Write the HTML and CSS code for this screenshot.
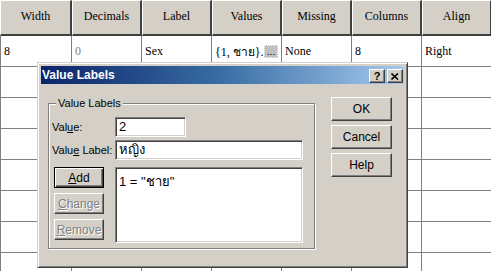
FILE: index.html
```html
<!doctype html>
<html>
  <head>
    <meta charset="utf-8">
    <title>Variable View - Value Labels</title>
    <link rel="stylesheet" href="styles.css">
  </head>
  <body>

    <div class="sheet">
      <div class="hd">Width</div>
      <div class="hd">Decimals</div>
      <div class="hd">Label</div>
      <div class="hd">Values</div>
      <div class="hd">Missing</div>
      <div class="hd">Columns</div>
      <div class="hd">Align</div>

      <div class="cell">8</div>
      <div class="cell dim">0</div>
      <div class="cell">Sex</div>
      <div class="cell values">{1, ชาย}.<span class="dots">...</span></div>
      <div class="cell">None</div>
      <div class="cell">8</div>
      <div class="cell">Right</div>

      <div class="cell"></div><div class="cell"></div><div class="cell"></div><div class="cell"></div><div class="cell"></div><div class="cell"></div><div class="cell"></div>
      <div class="cell"></div><div class="cell"></div><div class="cell"></div><div class="cell"></div><div class="cell"></div><div class="cell"></div><div class="cell"></div>
      <div class="cell"></div><div class="cell"></div><div class="cell"></div><div class="cell"></div><div class="cell"></div><div class="cell"></div><div class="cell"></div>
      <div class="cell"></div><div class="cell"></div><div class="cell"></div><div class="cell"></div><div class="cell"></div><div class="cell"></div><div class="cell"></div>
      <div class="cell"></div><div class="cell"></div><div class="cell"></div><div class="cell"></div><div class="cell"></div><div class="cell"></div><div class="cell"></div>
      <div class="cell"></div><div class="cell"></div><div class="cell"></div><div class="cell"></div><div class="cell"></div><div class="cell"></div><div class="cell"></div>
      <div class="cell"></div><div class="cell"></div><div class="cell"></div><div class="cell"></div><div class="cell"></div><div class="cell"></div><div class="cell"></div>
    </div>

    <div class="dialog">
      <div class="titlebar">
        <span class="title">Value Labels</span>
        <span class="tbtn help">?</span>
        <span class="tbtn">
          <svg width="8" height="7" viewBox="0 0 8 7"><path d="M0.5 0.5 L7 6.5 M7 0.5 L0.5 6.5" stroke="#000" stroke-width="1.6" fill="none"/></svg>
        </span>
      </div>

      <div class="dialog-body">
        <div class="group">
          <div class="group-title">Value Labels</div>

          <div class="field">
            <label>Val<u>u</u>e:</label>
            <div class="input short">2</div>
          </div>
          <div class="field">
            <label>Valu<u>e</u> Label:</label>
            <div class="input">หญิง</div>
          </div>

          <div class="list-row">
            <div class="btn-col">
              <div class="btn small default"><u>A</u>dd</div>
              <div class="btn small disabled"><u>C</u>hange</div>
              <div class="btn small disabled"><u>R</u>emove</div>
            </div>
            <div class="listbox">1 = "ชาย"</div>
          </div>
        </div>

        <div class="side">
          <div class="btn">OK</div>
          <div class="btn">Cancel</div>
          <div class="btn">Help</div>
        </div>
      </div>
    </div>

  </body>
</html>
```

FILE: styles.css
```css
body {
  background: #fff;
  margin: 0;
  padding: 0;
  width: 491px;
  height: 271px;
  overflow: hidden;
  position: relative;
}

/* spreadsheet grid */
.sheet {
  display: grid;
  grid-template-columns: 72px repeat(6, 70px);
  font: 12px "Liberation Serif", "Times New Roman", serif;
  color: #000;
}
.hd {
  box-sizing: border-box;
  height: 36px;
  background: #d4d0c8;
  border-top: 1px solid #fff;
  border-left: 1px solid #fff;
  border-right: 2px solid #404040;
  border-bottom: 2px solid #404040;
  display: flex;
  align-items: center;
  justify-content: center;
  padding-bottom: 2px;
}
.cell {
  box-sizing: border-box;
  height: 31px;
  border-right: 1px solid #808080;
  border-bottom: 1px solid #808080;
  display: flex;
  align-items: center;
  padding-left: 3px;
  white-space: nowrap;
  overflow: hidden;
}
.cell:nth-child(7n+1) {
  border-left: 1px solid #808080;
}
.dim {
  color: #808080;
}
.values {
  padding-right: 3px;
}
.dots {
  margin-left: auto;
  box-sizing: border-box;
  width: 14px;
  height: 13px;
  background: #c0c0c0;
  border: 1px dotted #f4f4f4;
  font: 10px/12px "Liberation Sans", Arial, sans-serif;
  text-align: center;
  color: #000;
}

/* dialog window */
.dialog {
  position: absolute;
  left: 37px;
  top: 62px;
  width: 371px;
  height: 206px;
  box-sizing: border-box;
  background: #d4d0c8;
  border: 1px solid;
  border-color: #d4d0c8 #404040 #404040 #d4d0c8;
  box-shadow: inset 1px 1px 0 #fff, inset -1px -1px 0 #808080;
  padding: 3px;
  font: 11px "Liberation Sans", Arial, sans-serif;
  color: #000;
}
.titlebar {
  height: 18px;
  display: flex;
  align-items: flex-start;
  gap: 2px;
  padding: 0 1px 0 1px;
  background: linear-gradient(to right, #0a246a, #3a6ea5 50%, #a6caf0);
}
.title {
  flex: 1;
  color: #fff;
  font: bold 12px/18px "Liberation Sans", Arial, sans-serif;
}
.tbtn {
  margin-top: 3px;
  box-sizing: border-box;
  width: 16px;
  height: 14px;
  background: #d4d0c8;
  border: 1px solid;
  border-color: #fff #404040 #404040 #fff;
  box-shadow: inset -1px -1px 0 #808080;
  display: flex;
  align-items: center;
  justify-content: center;
}
.help {
  font: bold 11px/12px "Liberation Sans", Arial, sans-serif;
}

.dialog-body {
  display: flex;
  align-items: flex-start;
  padding-left: 7px;
}

.group {
  margin-top: 19px;
  box-sizing: border-box;
  width: 267px;
  height: 146px;
  border: 1px solid #808080;
  box-shadow: inset 1px 1px 0 #fff, 1px 1px 0 #fff;
  padding: 0 11px 0 3px;
}
.group-title {
  width: fit-content;
  margin: -7px 0 0 4px;
  padding: 0 2px;
  line-height: 13px;
  background: #d4d0c8;
}
.field {
  display: flex;
  align-items: center;
  margin-top: 3px;
}
.group-title + .field {
  margin-top: 7px;
}
.field label {
  width: 63px;
  white-space: nowrap;
}
.input {
  box-sizing: border-box;
  width: 188px;
  height: 20px;
  background: #fff;
  border: 1px solid;
  border-color: #808080 #fff #fff #808080;
  box-shadow: inset 1px 1px 0 #404040, inset -1px -1px 0 #d4d0c8;
  padding-left: 3px;
  font-size: 13px;
  line-height: 18px;
}
.input.short {
  width: 71px;
}

.list-row {
  display: flex;
  margin-top: 7px;
}
.btn-col {
  display: flex;
  flex-direction: column;
  gap: 5px;
  margin-left: 2px;
  width: 50px;
}
.listbox {
  box-sizing: border-box;
  margin-left: 11px;
  width: 188px;
  height: 76px;
  background: #fff;
  border: 1px solid;
  border-color: #808080 #fff #fff #808080;
  box-shadow: inset 1px 1px 0 #404040, inset -1px -1px 0 #d4d0c8;
  padding: 3px 0 0 3px;
  font-size: 13px;
}

.btn {
  box-sizing: border-box;
  width: 61px;
  height: 24px;
  background: #d4d0c8;
  border: 1px solid;
  border-color: #fff #404040 #404040 #fff;
  box-shadow: inset -1px -1px 0 #808080;
  display: flex;
  align-items: center;
  justify-content: center;
  font-size: 12px;
}
.btn.small {
  width: 50px;
  height: 21px;
  font-size: 12px;
}
.btn.default {
  border-color: #000;
  box-shadow: inset 1px 1px 0 #fff, inset -1px -1px 0 #404040, inset -2px -2px 0 #808080;
}
.btn.disabled {
  color: #808080;
  text-shadow: 1px 1px 0 #fff;
}

.side {
  display: flex;
  flex-direction: column;
  gap: 4px;
  margin-top: 13px;
  margin-left: 16px;
}
```
